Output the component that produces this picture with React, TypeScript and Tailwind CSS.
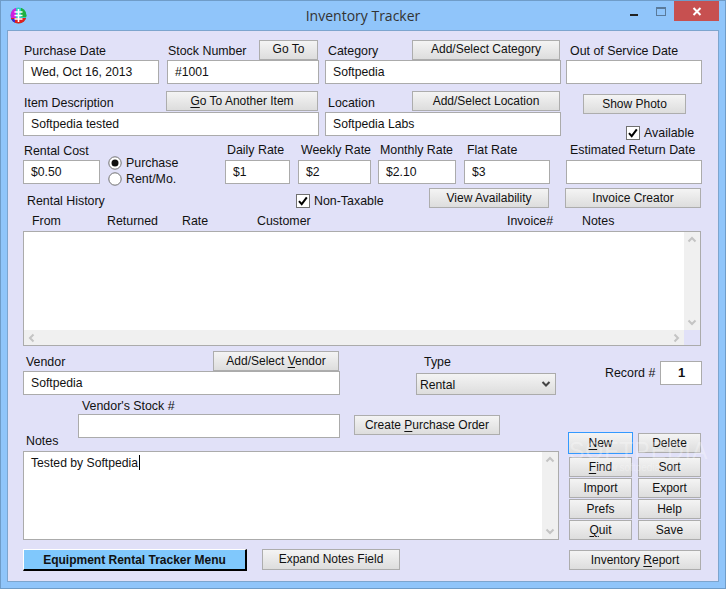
import React from "react";

const font = "font-['Liberation_Sans',Arial,sans-serif]";

function Btn({ w, h = 20, mt = 0, ml = 0, bold, children, cls = "" }: { w: number; h?: number; mt?: number; ml?: number; bold?: boolean; children: React.ReactNode; cls?: string }) {
  return (
    <div
      style={{ width: w, height: h, marginTop: mt, marginLeft: ml }}
      className={`flex shrink-0 items-center justify-center border border-[#adadad] bg-gradient-to-b from-[#f4f4f4] to-[#dddddd] pb-[1px] text-[12px] text-[#111] whitespace-nowrap ${bold ? "font-bold" : ""} ${cls}`}
    >
      <span>{children}</span>
    </div>
  );
}

function U({ children }: { children: React.ReactNode }) {
  return <span className="underline underline-offset-2">{children}</span>;
}

function Label({ x = 1, children, cls = "" }: { x?: number; children: React.ReactNode; cls?: string }) {
  return (
    <span style={{ marginLeft: x }} className={`whitespace-nowrap text-[12.4px] text-[#111] ${cls}`}>
      {children}
    </span>
  );
}

function Input({ w, h = 24, value = "", cls = "" }: { w?: number; h?: number; value?: string; cls?: string }) {
  return (
    <div
      style={{ width: w, height: h }}
      className={`flex shrink-0 items-center border border-[#ababab] bg-white pl-[7px] text-[12.2px] text-[#111] whitespace-nowrap ${cls}`}
    >
      {value}
    </div>
  );
}

function Field({ w, label, x = 1, value, head = 20, cls = "" }: { w: number; label: string; x?: number; value?: string; head?: number; cls?: string }) {
  return (
    <div style={{ width: w }} className="flex shrink-0 flex-col">
      <div style={{ height: head }} className="flex items-center">
        <Label x={x} cls={cls}>{label}</Label>
      </div>
      <Input h={24} value={value} />
    </div>
  );
}

function Check({ children }: { children: React.ReactNode }) {
  return (
    <div className="flex items-center">
      <svg width="14" height="14" viewBox="0 0 14 14" className="shrink-0">
        <rect x="0.5" y="0.5" width="13" height="13" fill="#fff" stroke="#707070" />
        <path d="M3 7.2 L5.7 10.2 L10.8 3.4" fill="none" stroke="#000" strokeWidth="2" />
      </svg>
      <span className="ml-[4px] whitespace-nowrap text-[12.4px] text-[#111]">{children}</span>
    </div>
  );
}

function Radio({ on, children }: { on?: boolean; children: React.ReactNode }) {
  return (
    <div className="flex h-[18px] items-center">
      <svg width="14" height="14" viewBox="0 0 14 14" className="shrink-0">
        <circle cx="7" cy="7" r="6.2" fill="#fff" stroke="#707070" />
        {on && <circle cx="7" cy="7" r="3.5" fill="#111" />}
      </svg>
      <span className="ml-[4px] whitespace-nowrap text-[12.4px] text-[#111]">{children}</span>
    </div>
  );
}

function Chevron({ dir }: { dir: "up" | "down" | "left" | "right" }) {
  const d = {
    up: "M2.5 7.5 L6 4 L9.5 7.5",
    down: "M2.5 4.5 L6 8 L9.5 4.5",
    left: "M7.5 2.5 L4 6 L7.5 9.5",
    right: "M4.5 2.5 L8 6 L4.5 9.5",
  }[dir];
  return (
    <svg width="12" height="12" viewBox="0 0 12 12">
      <path d={d} fill="none" stroke="#c4c4c4" strokeWidth="2" />
    </svg>
  );
}

function VScroll() {
  return (
    <div className="flex w-[16px] shrink-0 flex-col items-center justify-between bg-[#f0f0f0] py-[2px]">
      <Chevron dir="up" />
      <Chevron dir="down" />
    </div>
  );
}

export default function App() {
  return (
    <div className={`${font} relative flex h-[589px] w-[726px] flex-col overflow-hidden border border-[#6f9cc8] bg-[#90c5fa] text-[12.4px] leading-[16px]`}>
      {/* Title bar */}
      <div className="relative flex h-[29px] shrink-0 items-center justify-center">
        <svg width="17" height="17" viewBox="0 0 17 17" className="absolute left-[9px] top-[6px]">
          <defs>
            <clipPath id="c"><circle cx="8.5" cy="8.5" r="8" /></clipPath>
          </defs>
          <g clipPath="url(#c)">
            <rect width="17" height="17" fill="#2fd0c0" />
            <rect x="0" y="0" width="6" height="12" fill="#d020e0" />
            <rect x="11" y="0" width="6" height="10" fill="#20b040" />
            <rect x="0" y="11" width="17" height="6" fill="#e02020" />
            <rect x="0" y="12" width="5" height="5" fill="#3030e0" />
            <path d="M4.5 5h8M4.5 8.5h8M4.5 12h8M8.5 2v13" stroke="#fff" strokeWidth="1.6" />
          </g>
        </svg>
        <span className="mt-[1px] font-['Open_Sans',sans-serif] text-[14px] text-[#333]">Inventory Tracker</span>
        <div className="absolute left-[629px] top-[13px] h-[2px] w-[8px] bg-[#222]" />
        <div className="absolute left-[655px] top-[6px] h-[9px] w-[10px] border border-[#5a7a9a] border-t-2" />
        <div className="absolute left-[673px] top-0 flex h-[20px] w-[45px] items-center justify-center bg-[#c75050]">
          <svg width="10" height="9" viewBox="0 0 10 9">
            <path d="M1.5 1 L8.5 8 M8.5 1 L1.5 8" stroke="#fff" strokeWidth="2" />
          </svg>
        </div>
      </div>

      {/* Client area */}
      <div className="relative ml-[6px] mr-[6px] h-[552px] w-[712px] shrink-0 border border-[#7da5ce] bg-[#e1e1f8] pl-[15px]">
        {/* Row 1 */}
        <div className="mt-[8px] flex gap-[5px]">
          <div className="flex gap-[8px]">
            <Field w={136} label="Purchase Date" value="Wed, Oct 16, 2013" head={21} cls="mt-[2px]" />
            <div className="flex w-[152px] shrink-0 flex-col">
              <div className="flex h-[21px] items-center justify-between pr-[1px]">
                <Label cls="mt-[2px]">Stock Number</Label>
                <Btn w={59} h={20} mt={0}>Go To</Btn>
              </div>
              <Input value="#1001" />
            </div>
          </div>
          <div className="ml-[1px] flex w-[236px] shrink-0 flex-col">
            <div className="flex h-[21px] items-center justify-between pr-[1px]">
              <Label x={3} cls="mt-[2px]">Category</Label>
              <Btn w={148} h={20} cls="-mt-[1px]">Add/Select Category</Btn>
            </div>
            <Input value="Softpedia" />
          </div>
          <Field w={136} label="Out of Service Date" x={4} head={21} cls="mt-[2px]" />
        </div>

        {/* Row 2 */}
        <div className="mt-[6px] flex">
          <div className="flex w-[296px] shrink-0 flex-col">
            <div className="flex h-[22px] items-center justify-between pr-[1px]">
              <Label cls="mt-[3px]">Item Description</Label>
              <Btn w={152} h={20} cls="-mt-[2px]"><U>G</U>o To Another Item</Btn>
            </div>
            <Input value="Softpedia tested" />
          </div>
          <div className="ml-[6px] flex w-[236px] shrink-0 flex-col">
            <div className="flex h-[22px] items-center justify-between pr-[1px]">
              <Label x={3} cls="mt-[3px]">Location</Label>
              <Btn w={148} h={20}>Add/Select Location</Btn>
            </div>
            <Input value="Softpedia Labs" />
          </div>
          <div className="ml-[22px] flex h-[46px] flex-col">
            <Btn w={103} h={20} mt={4}>Show Photo</Btn>
            <div className="ml-[43px] mt-[11px]"><Check>Available</Check></div>
          </div>
        </div>

        {/* Row 3 */}
        <div className="mt-[4px] flex">
          <Field w={77} label="Rental Cost" value="$0.50" cls="mt-[1px]" />
          <div className="ml-[8px] mt-[15px] flex h-[29px] w-[117px] shrink-0 flex-col">
            <Radio on>Purchase</Radio>
            <Radio>Rent/Mo.</Radio>
          </div>
          <Field w={65} label="Daily Rate" x={2} value="$1" />
          <div className="ml-[8px]"><Field w={73} label="Weekly Rate" x={3} value="$2" /></div>
          <div className="ml-[7px]"><Field w={78} label="Monthly Rate" x={2} value="$2.10" /></div>
          <div className="ml-[8px]"><Field w={86} label="Flat Rate" x={3} value="$3" /></div>
          <div className="ml-[16px]"><Field w={136} label="Estimated Return Date" x={4} /></div>
        </div>

        {/* Row 4 */}
        <div className="mt-[4px] flex h-[20px]">
          <div className="flex w-[273px] shrink-0 items-center pt-[6px]">
            <Label x={4}>Rental History</Label>
          </div>
          <div className="mt-[5px] w-[133px] shrink-0"><Check>Non-Taxable</Check></div>
          <Btn w={120} h={20}>View Availability</Btn>
          <Btn w={136} h={20} ml={16}>Invoice Creator</Btn>
        </div>

        {/* Column headers */}
        <div className="mt-[5px] flex h-[16px] pl-[9px] text-[#111]">
          <span className="w-[75px]">From</span>
          <span className="w-[75px]">Returned</span>
          <span className="w-[75px]">Rate</span>
          <span className="w-[250px]">Customer</span>
          <span className="w-[75px]">Invoice#</span>
          <span>Notes</span>
        </div>

        {/* List */}
        <div className="mt-[2px] flex h-[115px] w-[678px] flex-col border border-[#ababab] bg-white">
          <div className="flex min-h-0 flex-1 justify-end">
            <VScroll />
          </div>
          <div className="flex h-[15px] shrink-0">
            <div className="flex flex-1 items-center justify-between bg-[#f0f0f0] px-[2px]">
              <Chevron dir="left" />
              <Chevron dir="right" />
            </div>
            <div className="w-[16px] bg-[#e1e1f8]" />
          </div>
        </div>

        {/* Vendor row */}
        <div className="mt-[5px] flex">
          <div className="flex w-[317px] shrink-0 flex-col">
            <div className="flex h-[20px] items-center justify-between pr-[1px]">
              <Label x={3} cls="mt-[1px]">Vendor</Label>
              <Btn w={126} h={20}>Add/Select <U>V</U>endor</Btn>
            </div>
            <Input h={24} value="Softpedia" />
          </div>
          <div className="ml-[76px] flex w-[140px] shrink-0 flex-col">
            <div className="flex h-[22px] items-center"><Label x={8}>Type</Label></div>
            <div className="flex h-[22px] items-center justify-between border border-[#ababab] bg-gradient-to-b from-[#f4f4f4] to-[#dddddd] pl-[3px] pr-[3px] text-[12.2px] text-[#111]">
              <span className="mt-[1px]">Rental</span>
              <svg width="12" height="12" viewBox="0 0 12 12">
                <path d="M2.5 4 L6 7.5 L9.5 4" fill="none" stroke="#444" strokeWidth="2" />
              </svg>
            </div>
          </div>
          <div className="ml-[49px] mt-[10px] flex h-[24px] items-center">
            <span className="w-[55px] whitespace-nowrap text-[#111]">Record #</span>
            <div className="flex h-[24px] w-[42px] items-center justify-center border border-[#ababab] bg-white pl-[1px] text-[13px] font-bold text-[#111]">1</div>
          </div>
        </div>

        {/* Lower area */}
        <div className="flex">
          <div className="flex w-[536px] shrink-0 flex-col">
            <div className="flex h-[56px]">
              <div className="flex w-[55px] shrink-0 items-end pb-[2px]"><Label x={3}>Notes</Label></div>
              <div className="flex flex-col">
                <div className="flex h-[19px] items-center"><Label x={4} cls="mt-[3px]">Vendor's Stock #</Label></div>
                <div className="flex">
                  <Input w={262} h={24} />
                  <Btn w={146} h={20} ml={14} mt={1}>Create <U>P</U>urchase Order</Btn>
                </div>
              </div>
            </div>
            <div className="flex h-[89px] border border-[#ababab] bg-white">
              <div className="flex-1 pl-[7px] pt-[3px] text-[12.2px] text-[#111]">
                Tested by Softpedia<span className="ml-[1px] inline-block h-[15px] w-[1px] bg-black align-[-3px]" />
              </div>
              <VScroll />
            </div>
            <div className="mt-[9px] flex">
              <div className="flex h-[22px] w-[224px] items-center justify-center border-b-2 border-l border-r-2 border-t border-b-black border-l-white border-r-black border-t-white bg-[#80c8fc] text-[12px] font-bold text-[#111]">
                Equipment Rental Tracker Menu
              </div>
              <Btn w={138} h={21} ml={15}>Expand Notes Field</Btn>
            </div>
          </div>

          <div className="ml-[9px] flex w-[134px] shrink-0 flex-col pt-[37px]">
            <div className="flex h-[25px]">
              <Btn w={65} h={22} cls="!border-[#3399ff]"><U>N</U>ew</Btn>
              <Btn w={63} h={20} ml={5} mt={1}>Delete</Btn>
            </div>
            <div className="ml-[1px] grid grid-cols-[63px_63px] gap-x-[6px] gap-y-[1px]">
              <Btn w={63}><U>F</U>ind</Btn>
              <Btn w={63}>Sort</Btn>
              <Btn w={63}>Import</Btn>
              <Btn w={63}>Export</Btn>
              <Btn w={63}>Prefs</Btn>
              <Btn w={63}>Help</Btn>
              <Btn w={63}><U>Q</U>uit</Btn>
              <Btn w={63}>Save</Btn>
            </div>
            <Btn w={132} h={20} ml={1} mt={10}>Inventory <U>R</U>eport</Btn>
          </div>
        </div>

        {/* Watermark */}
        <div className="pointer-events-none absolute left-[561px] top-[408px] flex flex-col items-center text-white/30">
          <span className="text-[23px] leading-[24px] tracking-[1px]">SOFTPEDIA</span>
          <span className="text-[10px] leading-[10px]">www.softpedia.com</span>
        </div>
      </div>
    </div>
  );
}
